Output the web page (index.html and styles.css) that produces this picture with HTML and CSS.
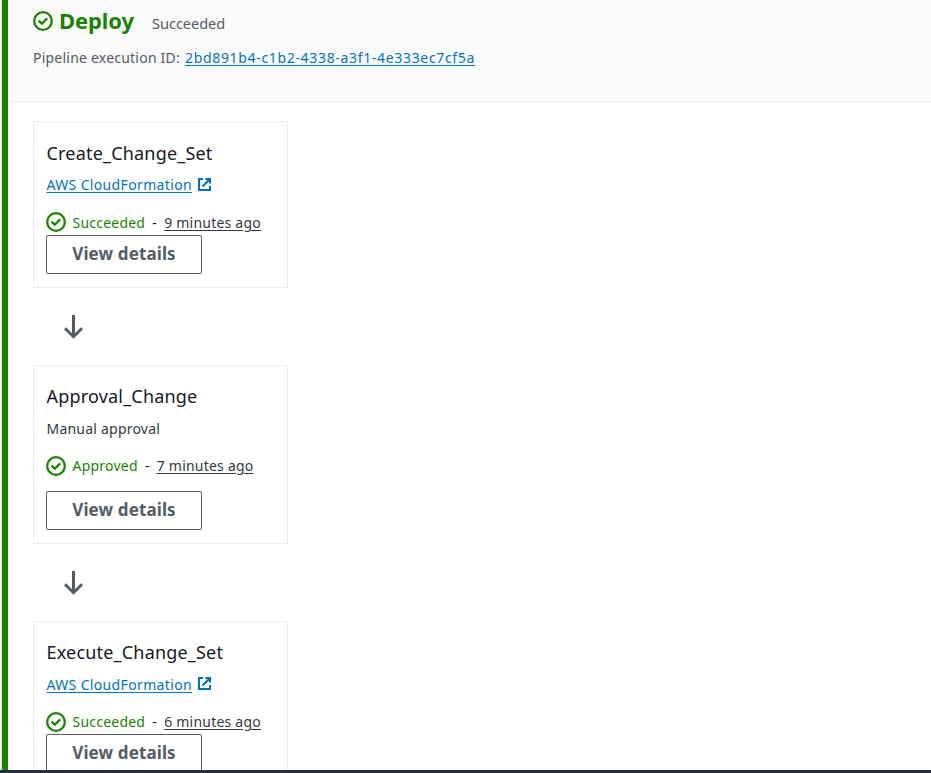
FILE: index.html
```html
<!DOCTYPE html>
<html lang="en">
<head>
<meta charset="utf-8">
<title>Deploy</title>
<link rel="stylesheet" href="styles.css">
</head>
<body>
<svg class="sprite" aria-hidden="true">
  <symbol id="check" viewBox="0 0 20 20"><circle cx="10" cy="10" r="8.8"/><path d="M5.6 9.7 8.8 12.7 14.2 7.4"/></symbol>
  <symbol id="external" viewBox="0 0 13 13"><path d="M5 1H1V12H12V8M7.5 1H12V5.5M12 1 4.5 8.5"/></symbol>
  <symbol id="arrow" viewBox="0 0 20 24"><path d="M9.5 0V22M1 13.2 9.5 21.7 18 13.2"/></symbol>
</svg>
<main class="stage">
  <header class="stage-header">
    <div class="heading">
      <svg class="icon-check"><use href="#check"/></svg>
      <h1>Deploy</h1>
      <span class="stage-status">Succeeded</span>
    </div>
    <p class="execution"><span class="execution-label">Pipeline execution ID:</span><a class="execution-id" href="#">2bd891b4-c1b2-4338-a3f1-4e333ec7cf5a</a></p>
  </header>
  <div class="actions">
    <section class="card">
      <h2>Create_Change_Set</h2>
      <p class="provider"><a href="#">AWS CloudFormation</a><svg class="icon-external"><use href="#external"/></svg></p>
      <p class="status status-low"><svg class="icon-check"><use href="#check"/></svg><span class="result">Succeeded</span><span class="dash">-</span><span class="time">9 minutes ago</span></p>
      <button>View details</button>
    </section>
    <svg class="arrow"><use href="#arrow"/></svg>
    <section class="card card-approval">
      <h2>Approval_Change</h2>
      <p class="provider"><span>Manual approval</span></p>
      <p class="status"><svg class="icon-check"><use href="#check"/></svg><span class="result">Approved</span><span class="dash">-</span><span class="time">7 minutes ago</span></p>
      <button>View details</button>
    </section>
    <svg class="arrow"><use href="#arrow"/></svg>
    <section class="card card-execute">
      <h2>Execute_Change_Set</h2>
      <p class="provider"><a href="#">AWS CloudFormation</a><svg class="icon-external"><use href="#external"/></svg></p>
      <p class="status"><svg class="icon-check"><use href="#check"/></svg><span class="result">Succeeded</span><span class="dash">-</span><span class="time">6 minutes ago</span></p>
      <button>View details</button>
    </section>
  </div>
</main>
<footer class="bottom-bar"></footer>
</body>
</html>
```

FILE: styles.css
```css
* { box-sizing: border-box; }
body {
  margin: 0;
  height: 773px;
  overflow: hidden;
  display: flex;
  flex-direction: column;
  background: #fff;
  color: #16191f;
  font: 14px/24px "Noto Sans", "Open Sans", sans-serif;
  letter-spacing: 0.22px;
  white-space: nowrap;
}
h1, h2, p { margin: 0; font-weight: 400; }
svg { fill: none; stroke: currentColor; flex: none; display: block; }
.sprite { display: none; }
.stage {
  height: 770px;
  overflow: hidden;
  margin-left: 1px;
  border-left: 1px solid #e3e6e6;
  box-shadow: inset 6px 0 #1d8102;
  padding-left: 6px;
}
.stage-header {
  height: 102px;
  padding: 6px 0 0 25px;
  background: #fafafa;
  border-bottom: 1px solid #eaeded;
  color: #545b64;
}
.heading { display: flex; height: 30px; align-items: center; }
.icon-check { width: 20px; height: 20px; stroke-width: 2.3; color: #1d8102; }
h1 {
  width: 93px;
  margin-left: 6px;
  padding-bottom: 2px;
  color: #1d8102;
  font-size: 22px;
  line-height: 30px;
  font-weight: 700;
  letter-spacing: -0.1px;
}
.stage-status { font-size: 14.5px; letter-spacing: 0; padding-top: 3px; }
.execution { display: flex; margin-top: 10px; }
.execution-label { width: 152px; }
a { color: #0073bb; text-decoration: underline; text-underline-offset: 2px; }
.execution-id { letter-spacing: 0.67px; }
.actions { padding: 19px 0 0 25px; }
.card {
  width: 255px;
  height: 167px;
  padding: 16px 12px 0;
  border: 1px solid #eaeded;
}
h2 { padding-left: 0.5px; font-size: 18px; line-height: 30px; letter-spacing: 0.19px; }
.provider { display: flex; margin-top: 5px; height: 24px; padding-left: 0.5px; }
.provider a { letter-spacing: 0.35px; }
.icon-external { width: 13px; height: 13px; margin: 5px 0 0 6px; stroke-width: 2; color: #0073bb; }
.provider span { color: #333840; }
.status { display: flex; align-items: center; height: 20px; margin-top: 15px; }
.status-low span { padding-top: 2px; }
.result { margin-left: 6.5px; color: #1d8102; }
.dash { width: 19px; text-align: center; }
.time { color: #333840; text-decoration: underline; text-underline-offset: 2px; }
button {
  display: block;
  width: 156px;
  height: 39px;
  margin-top: 3px;
  padding: 0 0 1px;
  border: 1px solid #545b64;
  border-radius: 2px;
  background: #fff;
  color: #545b64;
  font: 700 17px/36px "Noto Sans", "Open Sans", sans-serif;
  letter-spacing: 0.12px;
}
.card-approval { height: 179px; }
.card-approval, .card-execute { padding-top: 15px; }
.card-approval .provider, .card-execute .provider { margin-top: 6px; }
.card-execute .icon-external { margin-top: 4px; }
.card-approval button { margin-top: 15px; }
.card-execute button { margin-top: 2px; }
.arrow { width: 20px; height: 24px; margin: 27px 0 26px 31px; stroke-width: 3; color: #545b64; }
.bottom-bar { height: 3px; background: #232f3e; }
```
